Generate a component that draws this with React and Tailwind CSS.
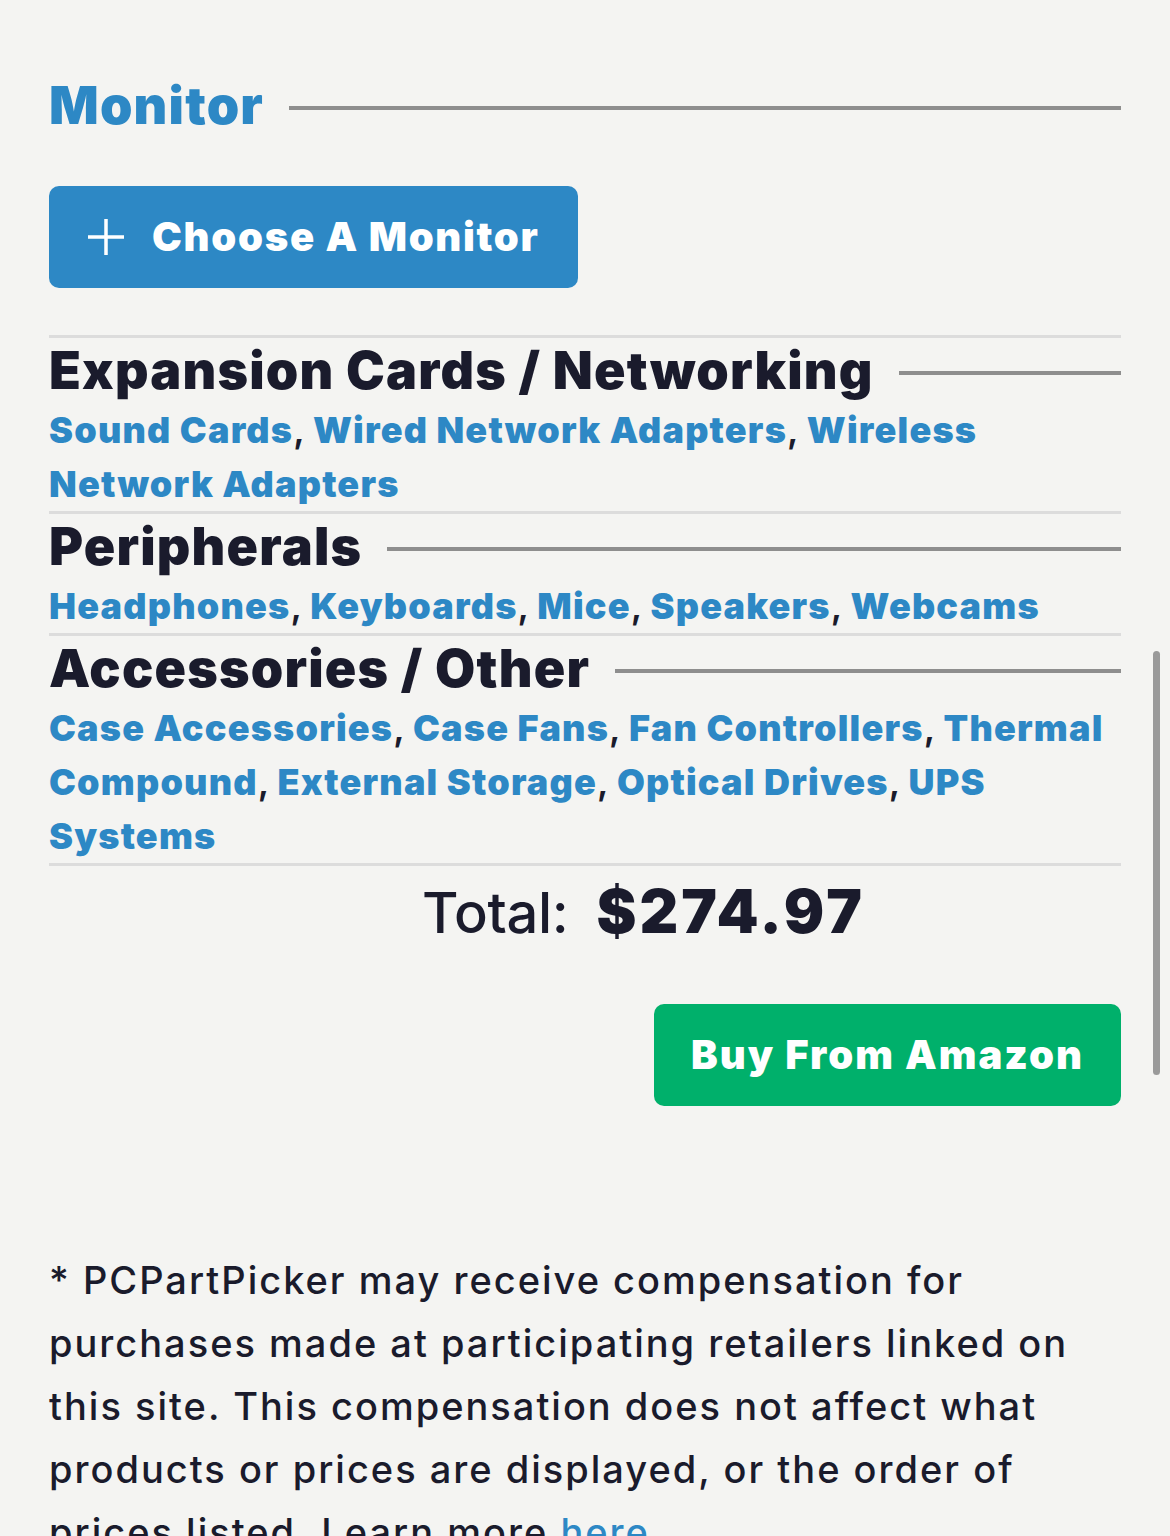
const categories = [
  {
    title: "Expansion Cards / Networking",
    links: ["Sound Cards", "Wired Network Adapters", "Wireless Network Adapters"],
  },
  {
    title: "Peripherals",
    links: ["Headphones", "Keyboards", "Mice", "Speakers", "Webcams"],
  },
  {
    title: "Accessories / Other",
    links: [
      "Case Accessories",
      "Case Fans",
      "Fan Controllers",
      "Thermal Compound",
      "External Storage",
      "Optical Drives",
      "UPS Systems",
    ],
  },
];

function HeadingRule({ children, className }) {
  return (
    <div className="flex items-center h-[65px]">
      <h2 className={`text-[52px] leading-[64px] font-black tracking-[1.2px] whitespace-nowrap ${className}`}>
        {children}
      </h2>
      <div className="flex-1 ml-[25px] mt-[4px] h-[4px] bg-[#8e8e8e]" />
    </div>
  );
}

function PlusIcon() {
  return (
    <svg width="38" height="38" viewBox="0 0 38 38" fill="none">
      <path d="M19 1v36M1 19h36" stroke="white" strokeWidth="3.5" />
    </svg>
  );
}

export default function App() {
  return (
    <div
      className="relative min-h-[1536px] bg-[#f4f4f2] text-[#1a1b2c] overflow-hidden"
      style={{ fontFamily: "Inter, 'Noto Sans', sans-serif" }}
    >
      <div className="px-[49px] pt-[73px] w-[1170px]">
        {/* Monitor slot */}
        <HeadingRule className="text-[#2d88c5]">Monitor</HeadingRule>

        <div className="mt-[48px]">
          <a className="inline-flex items-center h-[102px] pl-[38px] pr-[38px] rounded-[10px] bg-[#2d88c5] text-white">
            <PlusIcon />
            <span className="ml-[27px] text-[40px] font-black tracking-[1.7px]">Choose A Monitor</span>
          </a>
        </div>

        <div className="mt-[47px] h-[3px] bg-[#dcdcdc]" />

        {/* More part categories */}
        {categories.map((cat) => (
          <div key={cat.title}>
            <HeadingRule>{cat.title}</HeadingRule>
            <p className="text-[36px] leading-[54px] font-black">
              {cat.links.map((l, i) => (
                <span key={l}>
                  <a className="text-[#2d88c5] tracking-[1.2px]">{l}</a>
                  {i < cat.links.length - 1 && <span className="text-[#1a1b2c] font-semibold">, </span>}
                </span>
              ))}
            </p>
            <div className="h-[3px] bg-[#dcdcdc]" />
          </div>
        ))}

        {/* Total */}
        <div className="flex items-baseline pl-[373px] h-[88px] pt-[2px]">
          <span className="text-[56px] font-medium leading-[86px] tracking-[-0.3px]">Total:</span>
          <span className="ml-[28px] text-[60px] font-black leading-[86px] tracking-[3px]">$274.97</span>
        </div>

        <div className="flex justify-end mt-[50px]">
          <a className="flex items-center justify-center w-[467px] h-[102px] rounded-[10px] bg-[#00b06b] text-white text-[40px] font-black tracking-[2px]">
            Buy From Amazon
          </a>
        </div>

        <p className="mt-[143px] text-[38px] leading-[63px] font-medium tracking-[2px]">
          * PCPartPicker may receive compensation for purchases made at participating retailers linked on
          this site. This compensation does not affect what products or prices are displayed, or the order of
          prices listed. Learn more <a className="text-[#2d88c5]">here</a>.
        </p>
      </div>

      {/* overlay scrollbar */}
      <div className="absolute left-[1153px] top-[651px] w-[7px] h-[424px] rounded-full bg-[#9a9a9a]" />
    </div>
  );
}
